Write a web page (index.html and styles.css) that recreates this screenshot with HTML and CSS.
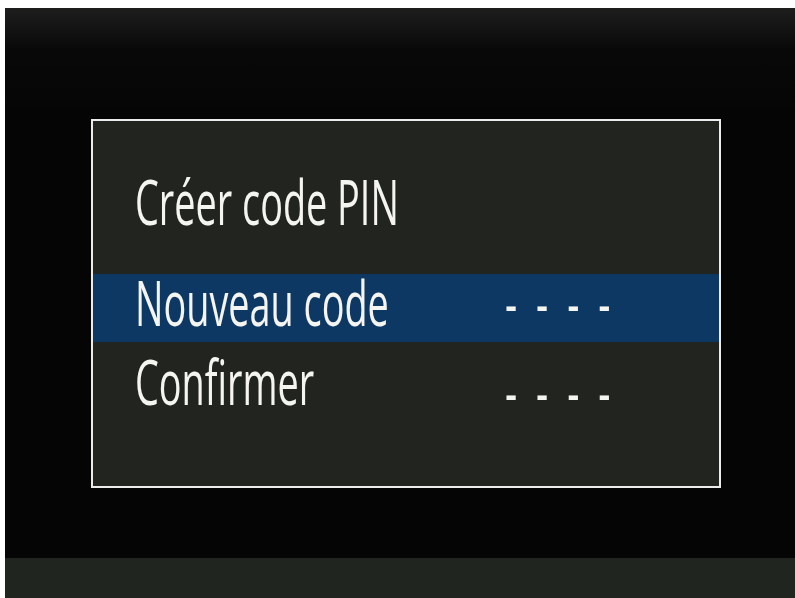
FILE: index.html
```html
<!DOCTYPE html>
<html lang="fr">
<head>
<meta charset="utf-8">
<title>Créer code PIN</title>
<link rel="stylesheet" href="styles.css">
</head>
<body>
<div class="screen">
  <div class="top-area"></div>
  <div class="dialog">
    <div class="title"><span class="txt">Créer code PIN</span></div>
    <div class="row selected">
      <span class="label"><span class="txt">Nouveau code</span></span>
      <span class="value"><span class="txt">- - - -</span></span>
    </div>
    <div class="row second">
      <span class="label"><span class="txt">Confirmer</span></span>
      <span class="value"><span class="txt">- - - -</span></span>
    </div>
  </div>
  <div class="spacer"></div>
  <div class="bottom-bar"></div>
</div>
</body>
</html>
```

FILE: styles.css
```css
html, body {
  margin: 0;
  padding: 0;
  background: #ffffff;
}
body {
  padding: 8px 0 0 5px;
  width: 795px;
  height: 598px;
  box-sizing: border-box;
  overflow: hidden;
}
.screen {
  width: 790px;
  height: 590px;
  background: #050505;
  display: flex;
  flex-direction: column;
  font-family: "Open Sans", "DejaVu Sans", sans-serif;
  color: #f4f4f0;
}
.top-area {
  height: 111px;
  flex: none;
  background: linear-gradient(to bottom, #1e1e1d 0px, #141414 20px, #080808 42px, #050505 111px);
}
.dialog {
  flex: none;
  margin-left: 86px;
  width: 626px;
  height: 365px;
  border: 2px solid #ececec;
  background: #21241f;
  display: flex;
  flex-direction: column;
}
.txt {
  display: inline-block;
  transform: scaleX(0.61);
  transform-origin: left center;
  white-space: nowrap;
}
.title {
  height: 153px;
  padding-left: 42px;
  box-sizing: border-box;
  font-size: 62px;
  line-height: 62px;
  padding-top: 49px;
}
.row {
  height: 68px;
  box-sizing: border-box;
  display: flex;
  align-items: center;
  padding-left: 42px;
  padding-bottom: 12px;
  font-size: 62px;
  line-height: 56px;
}
.row.selected {
  background: #0d3863;
}
.row.second {
  margin-top: 11px;
}
.label {
  width: 370px;
  flex: none;
}
.value {
  font-size: 62px;
  letter-spacing: 0.12em;
}
.row.second .value {
  margin-top: 20px;
}
.spacer {
  flex: 1;
}
.bottom-bar {
  height: 40px;
  flex: none;
  background: #21251f;
}
```
